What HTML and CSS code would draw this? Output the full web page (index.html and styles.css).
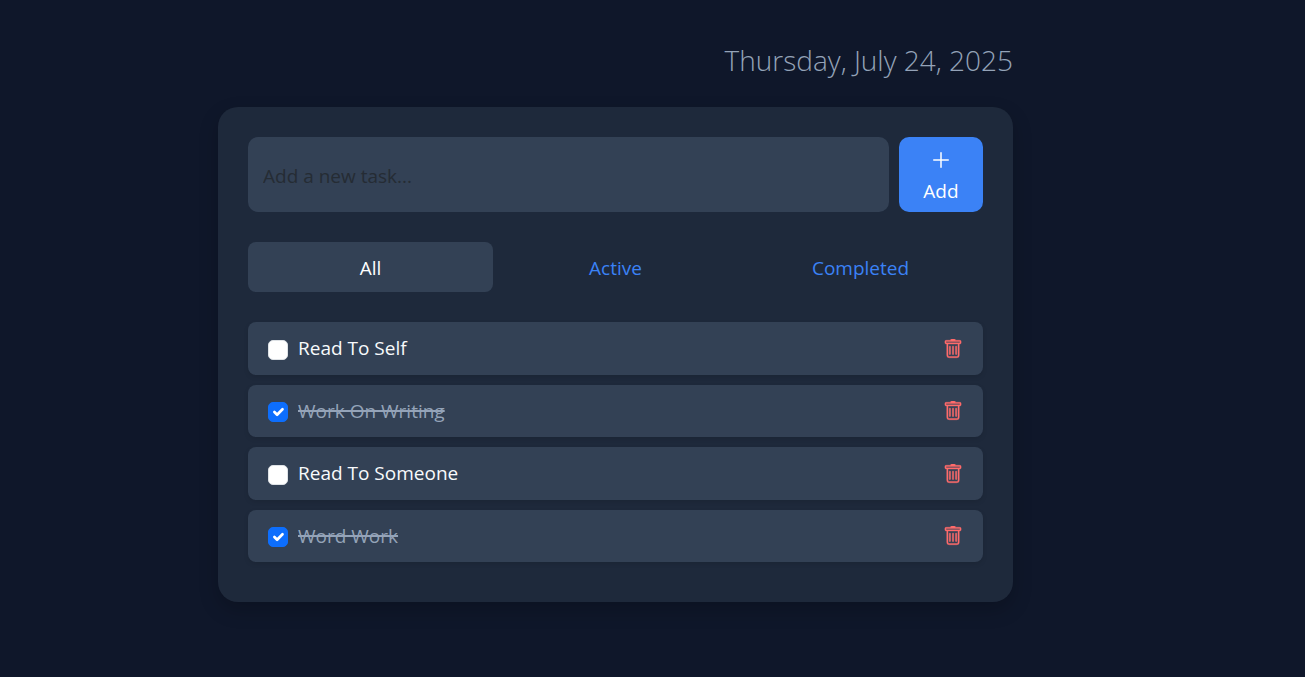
FILE: index.html
```html
<!DOCTYPE html>
<html lang="en">
<head>
<meta charset="utf-8">
<meta name="viewport" content="width=device-width, initial-scale=1">
<title>Tasks</title>
<link rel="stylesheet" href="styles.css">
</head>
<body>
<svg class="sprite" aria-hidden="true">
  <symbol id="trash" viewBox="0 0 16 16" stroke="currentColor" stroke-width=".3">
    <path d="M5.5 5.5A.5.5 0 0 1 6 6v6a.5.5 0 0 1-1 0V6a.5.5 0 0 1 .5-.5m2.5 0a.5.5 0 0 1 .5.5v6a.5.5 0 0 1-1 0V6a.5.5 0 0 1 .5-.5m3 .5a.5.5 0 0 0-1 0v6a.5.5 0 0 0 1 0z"/>
    <path d="M14.5 3a1 1 0 0 1-1 1H13v9a2 2 0 0 1-2 2H5a2 2 0 0 1-2-2V4h-.5a1 1 0 0 1-1-1V2a1 1 0 0 1 1-1H6a1 1 0 0 1 1-1h2a1 1 0 0 1 1 1h3.5a1 1 0 0 1 1 1zM4.118 4 4 4.059V13a1 1 0 0 0 1 1h6a1 1 0 0 0 1-1V4.059L11.882 4zM2.5 3h11V2h-11z"/>
  </symbol>
</svg>
<main class="planner">
  <h1 class="date">Thursday, July 24, 2025</h1>
  <section class="card">
    <form class="entry">
      <input class="entry-input" type="text" placeholder="Add a new task..." aria-label="New task">
      <button class="entry-add" type="button">
        <svg class="icon" viewBox="0 0 16 16" aria-hidden="true"><path fill-rule="evenodd" d="M8 1.600a.6.6 0 0 1 .6.6v5.200h5.200a.6.6 0 0 1 0 1.200H8.600v5.200a.6.6 0 0 1-1.200 0V8.600H2.200a.6.6 0 0 1 0-1.200h5.200V2.200a.6.6 0 0 1 .6-.6"/></svg>
        <span>Add</span>
      </button>
    </form>
    <nav class="tabs">
      <a class="tab tab-current" href="#all">All</a>
      <a class="tab" href="#active">Active</a>
      <a class="tab" href="#completed">Completed</a>
    </nav>
    <ul class="tasks">
      <li class="task">
        <input class="check" type="checkbox" id="task-1">
        <label class="name" for="task-1">Read To Self</label>
        <button class="remove" type="button" aria-label="Delete Read To Self"><svg class="icon" aria-hidden="true"><use href="#trash"/></svg></button>
      </li>
      <li class="task">
        <input class="check" type="checkbox" id="task-2" checked>
        <label class="name" for="task-2">Work On Writing</label>
        <button class="remove" type="button" aria-label="Delete Work On Writing"><svg class="icon" aria-hidden="true"><use href="#trash"/></svg></button>
      </li>
      <li class="task">
        <input class="check" type="checkbox" id="task-3">
        <label class="name" for="task-3">Read To Someone</label>
        <button class="remove" type="button" aria-label="Delete Read To Someone"><svg class="icon" aria-hidden="true"><use href="#trash"/></svg></button>
      </li>
      <li class="task">
        <input class="check" type="checkbox" id="task-4" checked>
        <label class="name" for="task-4">Word Work</label>
        <button class="remove" type="button" aria-label="Delete Word Work"><svg class="icon" aria-hidden="true"><use href="#trash"/></svg></button>
      </li>
    </ul>
  </section>
</main>
</body>
</html>
```
FILE: styles.css
```css
* { box-sizing: border-box; }

body {
  margin: 0;
  padding: 42px 74px 40px 0;
  background: #0f172a;
  color: #f8fafc;
  font: 19px/30px "Segoe UI", "Open Sans", "Noto Sans", sans-serif;
}

.sprite { display: none; }

.icon {
  display: block;
  width: 20px;
  height: 20px;
  fill: currentColor;
}

.planner {
  max-width: 795px;
  margin: 0 auto;
}

.date {
  margin: 0 0 29px;
  color: #94a3b8;
  font-size: 28px;
  font-weight: 300;
  line-height: 36px;
  text-align: right;
}

.card {
  padding: 30px 30px 40px;
  border-radius: 20px;
  background: #1e293b;
  box-shadow: 0 8px 20px rgba(0, 0, 0, 0.2);
}

.entry {
  display: flex;
  gap: 10px;
  margin-bottom: 30px;
}

.entry-input {
  flex: 1;
  min-width: 0;
  padding: 2px 15px 0;
  border: 0;
  border-radius: 10px;
  background: #334155;
  color: inherit;
  font: inherit;
}

.entry-input::placeholder {
  color: #212529;
  opacity: 0.75;
}

.entry-add {
  display: flex;
  flex-direction: column;
  align-items: center;
  gap: 6px;
  min-width: 84px;
  padding: 13px 20px 6px;
  border: 0;
  border-radius: 10px;
  background: #3b82f6;
  color: #fff;
  font: inherit;
}

.tabs {
  display: grid;
  grid-template-columns: repeat(3, 1fr);
  margin-bottom: 30px;
}

.tab {
  padding: 11px 0 9px;
  border-radius: 8px;
  color: #3b82f6;
  text-align: center;
  text-decoration: none;
}

.tab-current {
  background: #334155;
  color: #fff;
}

.tasks {
  display: grid;
  grid-auto-rows: 1fr;
  gap: 10px;
  min-height: 240px;
  margin: 0;
  padding: 0;
  list-style: none;
}

.task {
  display: flex;
  align-items: center;
  gap: 10px;
  padding: 0 20px;
  border-radius: 8px;
  background: #334155;
  box-shadow: 0 2px 5px rgba(0, 0, 0, 0.1);
  color: #f8fafc;
}

.check {
  flex: none;
  width: 20px;
  height: 20px;
  margin: 3px 0 0;
  border: 1px solid #dee2e6;
  border-radius: 5px;
  background: #fff;
  appearance: none;
}

.check:checked {
  border-color: #0d6efd;
  background: #0d6efd url("data:image/svg+xml,%3csvg xmlns='http://www.w3.org/2000/svg' viewBox='0 0 20 20'%3e%3cpath fill='none' stroke='%23fff' stroke-linecap='round' stroke-linejoin='round' stroke-width='3' d='m6 10 3 3 6-6'/%3e%3c/svg%3e") center / contain no-repeat;
}

.name { flex: 1; }

.check:checked + .name {
  color: #94a3b8;
  text-decoration: line-through;
  text-decoration-thickness: 2px;
}

.remove {
  padding: 1px 0 0;
  border: 0;
  background: none;
  color: #ff6b6b;
}
```
